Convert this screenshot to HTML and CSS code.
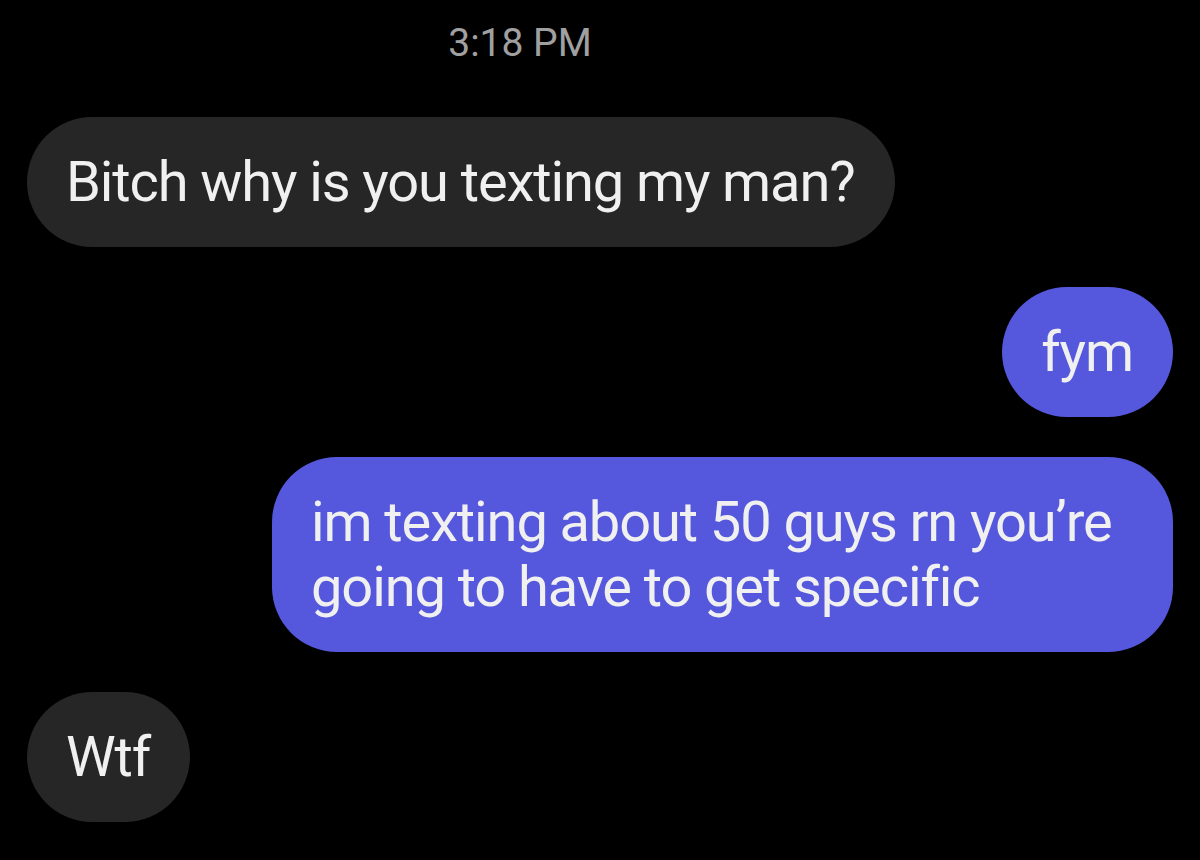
FILE: index.html
```html
<!DOCTYPE html>
<html lang="en">
<head>
  <meta charset="UTF-8" />
  <meta name="viewport" content="width=device-width, initial-scale=1.0"/>
  <title>Messages</title>
  <link rel="stylesheet" href="styles.css">
</head>
<body>
  <div class="thread">
    <div class="timestamp">3:18 PM</div>

    <div class="bubble incoming">Bitch why is you texting my man?</div>
    <div class="bubble outgoing">fym</div>
    <div class="bubble outgoing">im texting about 50 guys rn you’re going to have to get specific</div>
    <div class="bubble incoming">Wtf</div>
  </div>
</body>
</html>
```

FILE: styles.css
```css
/* Reset */
* {
  margin: 0;
  padding: 0;
  box-sizing: border-box;
}

html, body {
  height: 100%;
  background-color: #000;
  font-family: Roboto, "Noto Sans", sans-serif;
  overflow: hidden;
}

.thread {
  display: flex;
  flex-direction: column;
  gap: 40px;
  padding: 20px 27px 0;
}

.timestamp {
  color: #a0a0a0;
  font-size: 39px;
  line-height: 46px;
  text-align: center;
  padding-right: 160px;
  margin-bottom: 11px;
}

/* Chat bubbles */
.bubble {
  max-width: 901px;
  padding: 33px 40px 32px 39px;
  border-radius: 65px;
  font-size: 56px;
  line-height: 65px;
  letter-spacing: -1.1px;
  color: #f0f0f0;
}

.incoming {
  align-self: flex-start;
  background-color: #262626;
}

.outgoing {
  align-self: flex-end;
  background-color: #5558dc;
}
```
